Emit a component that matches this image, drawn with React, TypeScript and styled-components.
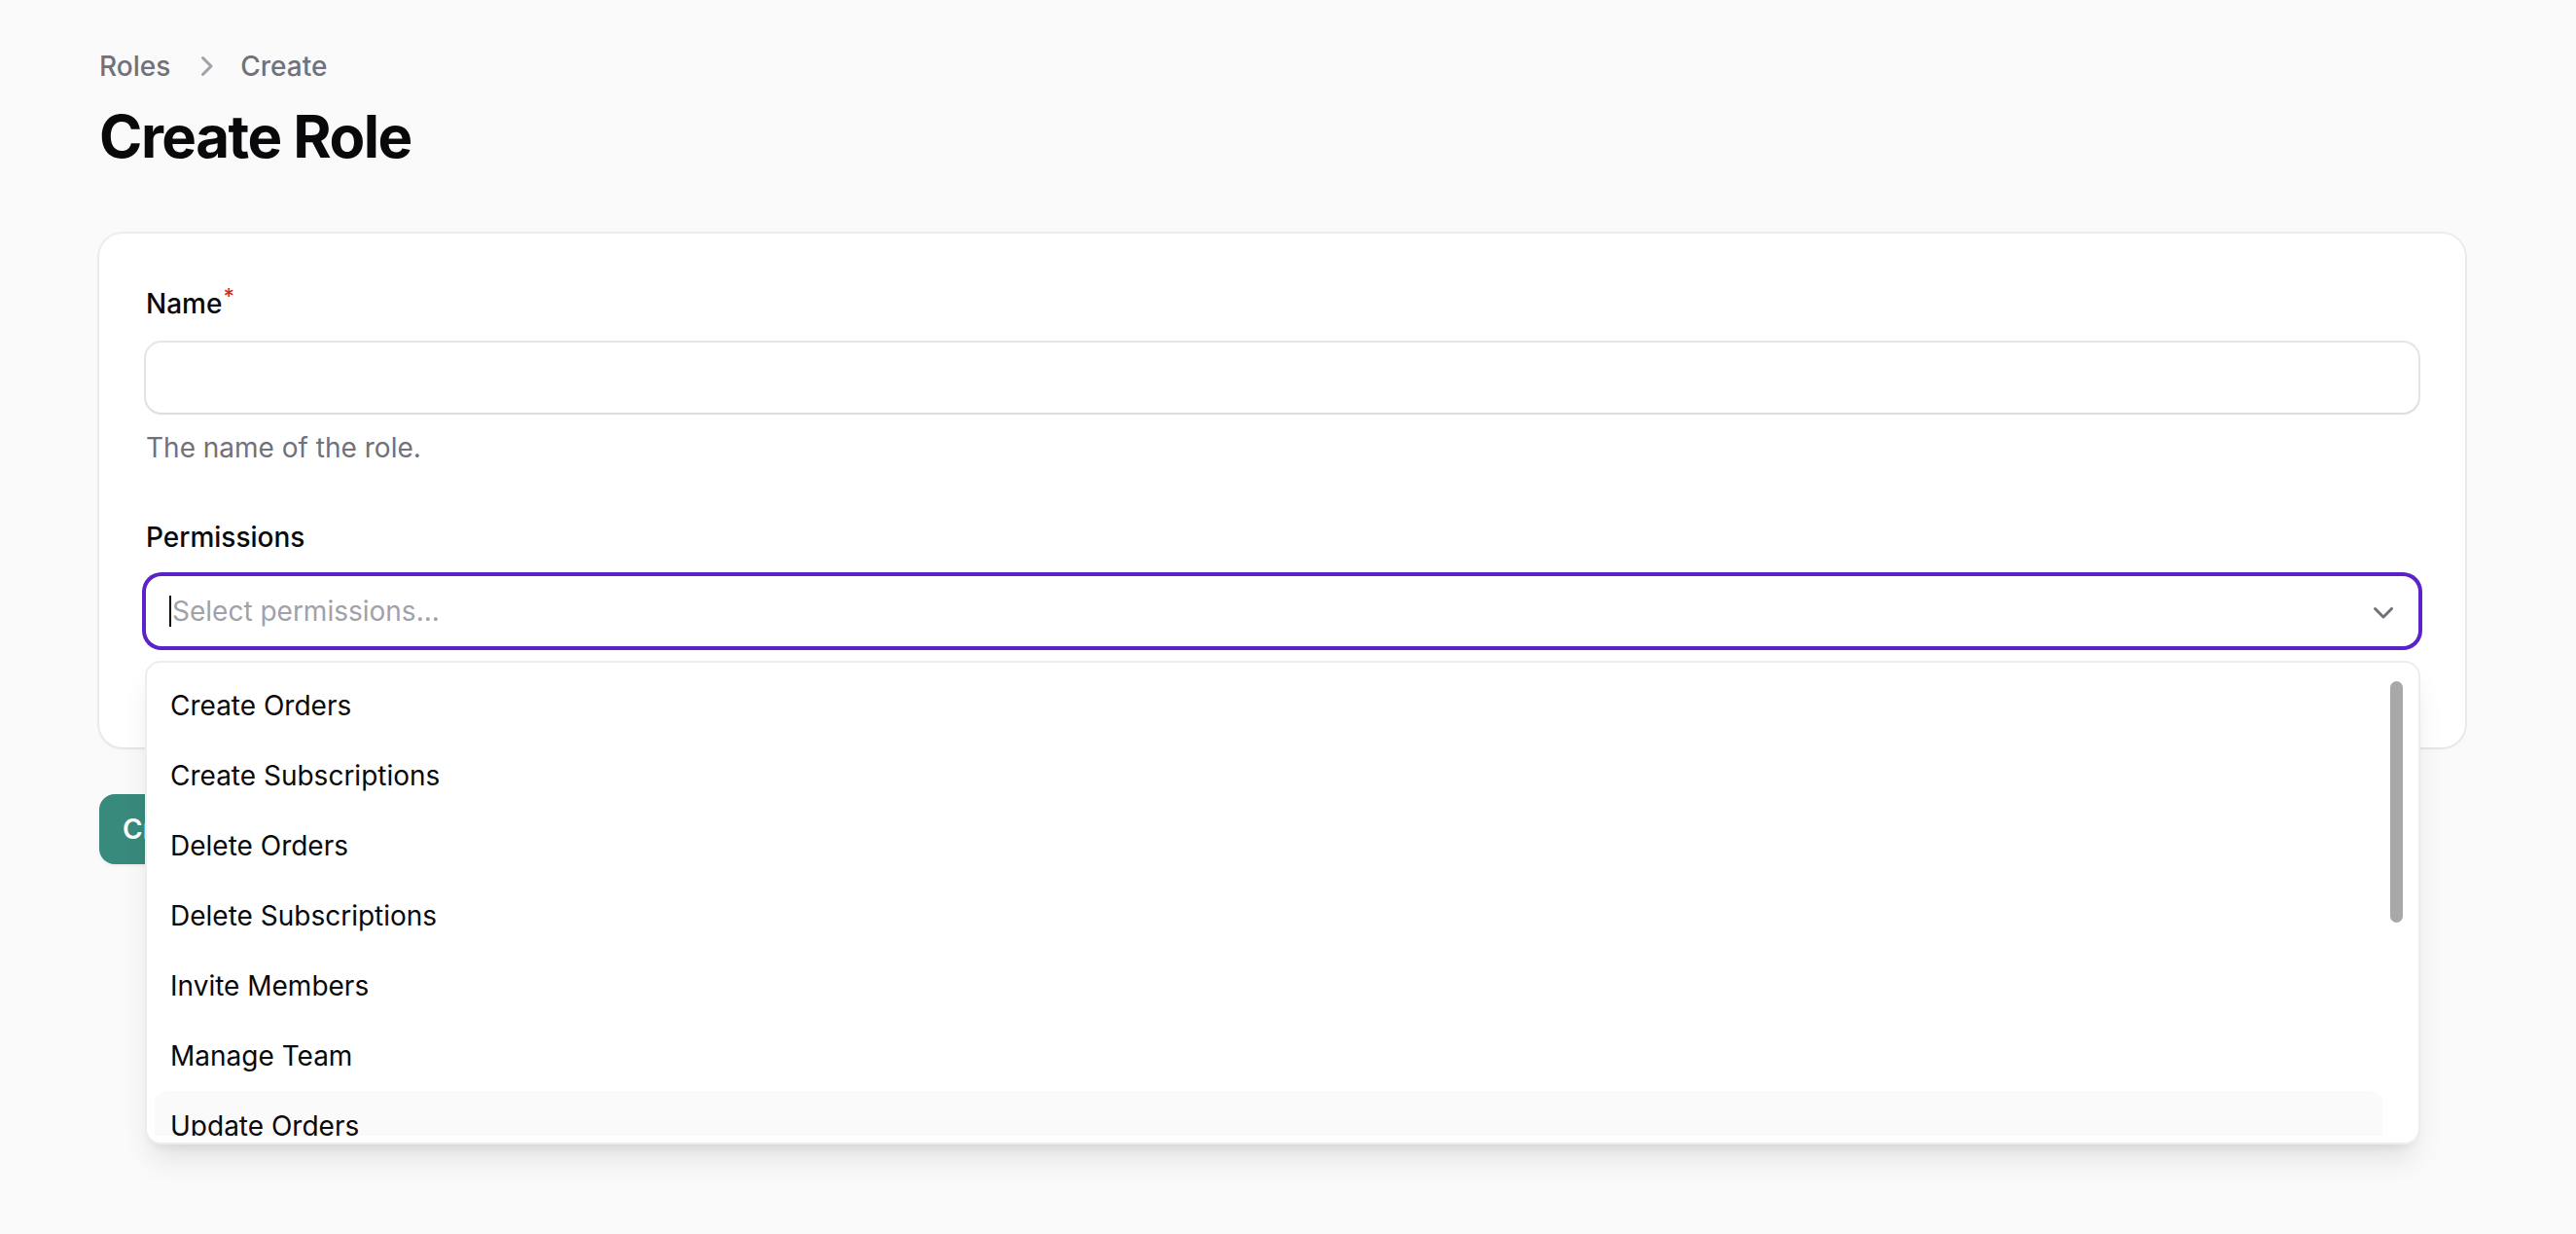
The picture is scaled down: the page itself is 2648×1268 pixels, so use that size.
import React from "react";
import styled, { createGlobalStyle } from "styled-components";

const GlobalStyle = createGlobalStyle`
    html, body {
        margin: 0;
        padding: 0;
        background: #fafafa;
        font-family: Inter, "Noto Sans", "Liberation Sans", sans-serif;
        color: #09090b;
        -webkit-font-smoothing: antialiased;
    }
    #root {
        min-height: 100vh;
    }
    * {
        box-sizing: border-box;
    }
`;

const Page = styled.main`
    min-height: 100vh;
    display: flex;
    flex-direction: column;
    padding: 48px 114px 0 102px;
`;

const Header = styled.header`
    display: flex;
    flex-direction: column;
    gap: 16px;
`;

const Breadcrumbs = styled.nav`
    display: flex;
    align-items: center;
    gap: 16px;
    font-size: 28px;
    line-height: 40px;
    font-weight: 500;
    color: #71717a;
`;

const Crumb = styled.span`
    white-space: nowrap;
`;

const Title = styled.h1`
    margin: 0;
    font-size: 60px;
    line-height: 72px;
    font-weight: 700;
    letter-spacing: -1.5px;
    color: #09090b;
`;

const Card = styled.section`
    margin-top: 64px;
    background: #ffffff;
    border-radius: 24px;
    padding: 48px;
    box-shadow: 0 0 0 2px rgba(9, 9, 11, 0.05), 0 2px 4px rgba(0, 0, 0, 0.04);
    display: flex;
    flex-direction: column;
    gap: 48px;
`;

const Field = styled.div`
    display: grid;
    gap: 16px;
`;

const Label = styled.label`
    font-size: 28px;
    line-height: 48px;
    font-weight: 500;
    color: #09090b;
`;

const Required = styled.sup`
    color: #dc2626;
    font-weight: 500;
    font-size: 22px;
    line-height: 0;
    margin-left: 1px;
`;

const TextBox = styled.div`
    height: 72px;
    border-radius: 16px;
    background: #ffffff;
    box-shadow: 0 0 0 2px rgba(9, 9, 11, 0.1), 0 2px 3px rgba(0, 0, 0, 0.05);
`;

const Helper = styled.p`
    margin: 0;
    font-size: 28px;
    line-height: 40px;
    color: #71717a;
`;

const SelectBox = styled.div<{ $focused?: boolean }>`
    position: relative;
    height: 72px;
    border-radius: 16px;
    background: #ffffff;
    display: flex;
    align-items: center;
    padding: 0 16px 0 24px;
    box-shadow: ${({ $focused }) =>
        $focused ? "0 0 0 4px #5a22c8" : "0 0 0 2px rgba(9, 9, 11, 0.1)"};
`;

const Placeholder = styled.span`
    flex: 1;
    display: flex;
    align-items: center;
    font-size: 28px;
    line-height: 40px;
    color: #a1a1aa;
`;

const Caret = styled.span`
    display: inline-block;
    width: 2px;
    height: 32px;
    background: #09090b;
    margin-right: 1px;
`;

const Dropdown = styled.div`
    position: absolute;
    z-index: 10;
    top: calc(100% + 15px);
    left: -1px;
    right: -2px;
    background: #ffffff;
    border: 2px solid #ededed;
    border-radius: 16px;
    padding: 8px 8px 7px 8px;
    box-shadow: 0 20px 30px -6px rgba(0, 0, 0, 0.1), 0 8px 12px -8px rgba(0, 0, 0, 0.1);
    display: flex;
`;

const OptionList = styled.ul`
    flex: 1;
    margin: 0;
    padding: 0;
    list-style: none;
    height: 478px;
    overflow: hidden;
`;

const Option = styled.li<{ $active?: boolean }>`
    height: 72px;
    padding: 16px;
    border-radius: 12px;
    font-size: 28px;
    line-height: 40px;
    color: #09090b;
    background: ${({ $active }) => ($active ? "#fafafa" : "transparent")};
`;

const ScrollGutter = styled.div`
    width: 29px;
    padding: 11px 0 0 8px;
`;

const ScrollThumb = styled.div`
    width: 13px;
    height: 248px;
    border-radius: 7px;
    background: #a8a8a8;
`;

const Actions = styled.div`
    margin-top: 48px;
    display: flex;
    gap: 24px;
`;

const Button = styled.button<{ $primary?: boolean }>`
    height: 72px;
    padding: 0 24px;
    border: none;
    border-radius: 16px;
    font-family: inherit;
    font-size: 28px;
    line-height: 40px;
    font-weight: 600;
    color: ${({ $primary }) => ($primary ? "#ffffff" : "#09090b")};
    background: ${({ $primary }) => ($primary ? "#388a7c" : "#ffffff")};
    box-shadow: ${({ $primary }) =>
        $primary ? "0 2px 3px rgba(0, 0, 0, 0.05)" : "0 0 0 2px rgba(9, 9, 11, 0.1)"};
`;

const ChevronRight = () => (
    <svg width="40" height="40" viewBox="0 0 20 20" fill="#a1a1aa" aria-hidden="true">
        <path
            fillRule="evenodd"
            d="M8.22 5.22a.75.75 0 0 1 1.06 0l4.25 4.25a.75.75 0 0 1 0 1.06l-4.25 4.25a.75.75 0 0 1-1.06-1.06L11.94 10 8.22 6.28a.75.75 0 0 1 0-1.06Z"
        />
    </svg>
);

const ChevronDown = () => (
    <svg width="40" height="40" viewBox="0 0 20 20" fill="#71717a" aria-hidden="true">
        <path
            fillRule="evenodd"
            d="M5.22 8.22a.75.75 0 0 1 1.06 0L10 11.94l3.72-3.72a.75.75 0 1 1 1.06 1.06l-4.25 4.25a.75.75 0 0 1-1.06 0L5.22 9.28a.75.75 0 0 1 0-1.06Z"
        />
    </svg>
);

const permissions = [
    "Create Orders",
    "Create Subscriptions",
    "Delete Orders",
    "Delete Subscriptions",
    "Invite Members",
    "Manage Team",
    "Update Orders",
    "Update Subscriptions",
    "View Members",
    "View Orders",
    "View Subscriptions",
    "View Team",
];

const App = () => {
    return (
        <>
            <GlobalStyle />
            <Page>
                <Header>
                    <Breadcrumbs>
                        <Crumb>Roles</Crumb>
                        <ChevronRight />
                        <Crumb>Create</Crumb>
                    </Breadcrumbs>
                    <Title>Create Role</Title>
                </Header>

                <Card>
                    <Field>
                        <Label>
                            Name<Required>*</Required>
                        </Label>
                        <TextBox />
                        <Helper>The name of the role.</Helper>
                    </Field>

                    <Field>
                        <Label>Permissions</Label>
                        <SelectBox $focused>
                            <Placeholder>
                                <Caret />
                                Select permissions...
                            </Placeholder>
                            <ChevronDown />
                            <Dropdown>
                                <OptionList>
                                    {permissions.map((name) => (
                                        <Option key={name} $active={name === "Update Orders"}>
                                            {name}
                                        </Option>
                                    ))}
                                </OptionList>
                                <ScrollGutter>
                                    <ScrollThumb />
                                </ScrollGutter>
                            </Dropdown>
                        </SelectBox>
                        <Helper>The permissions granted to the role.</Helper>
                    </Field>
                </Card>

                <Actions>
                    <Button $primary>Create</Button>
                    <Button>Create &amp; create another</Button>
                    <Button>Cancel</Button>
                </Actions>
            </Page>
        </>
    );
};

export default App;
